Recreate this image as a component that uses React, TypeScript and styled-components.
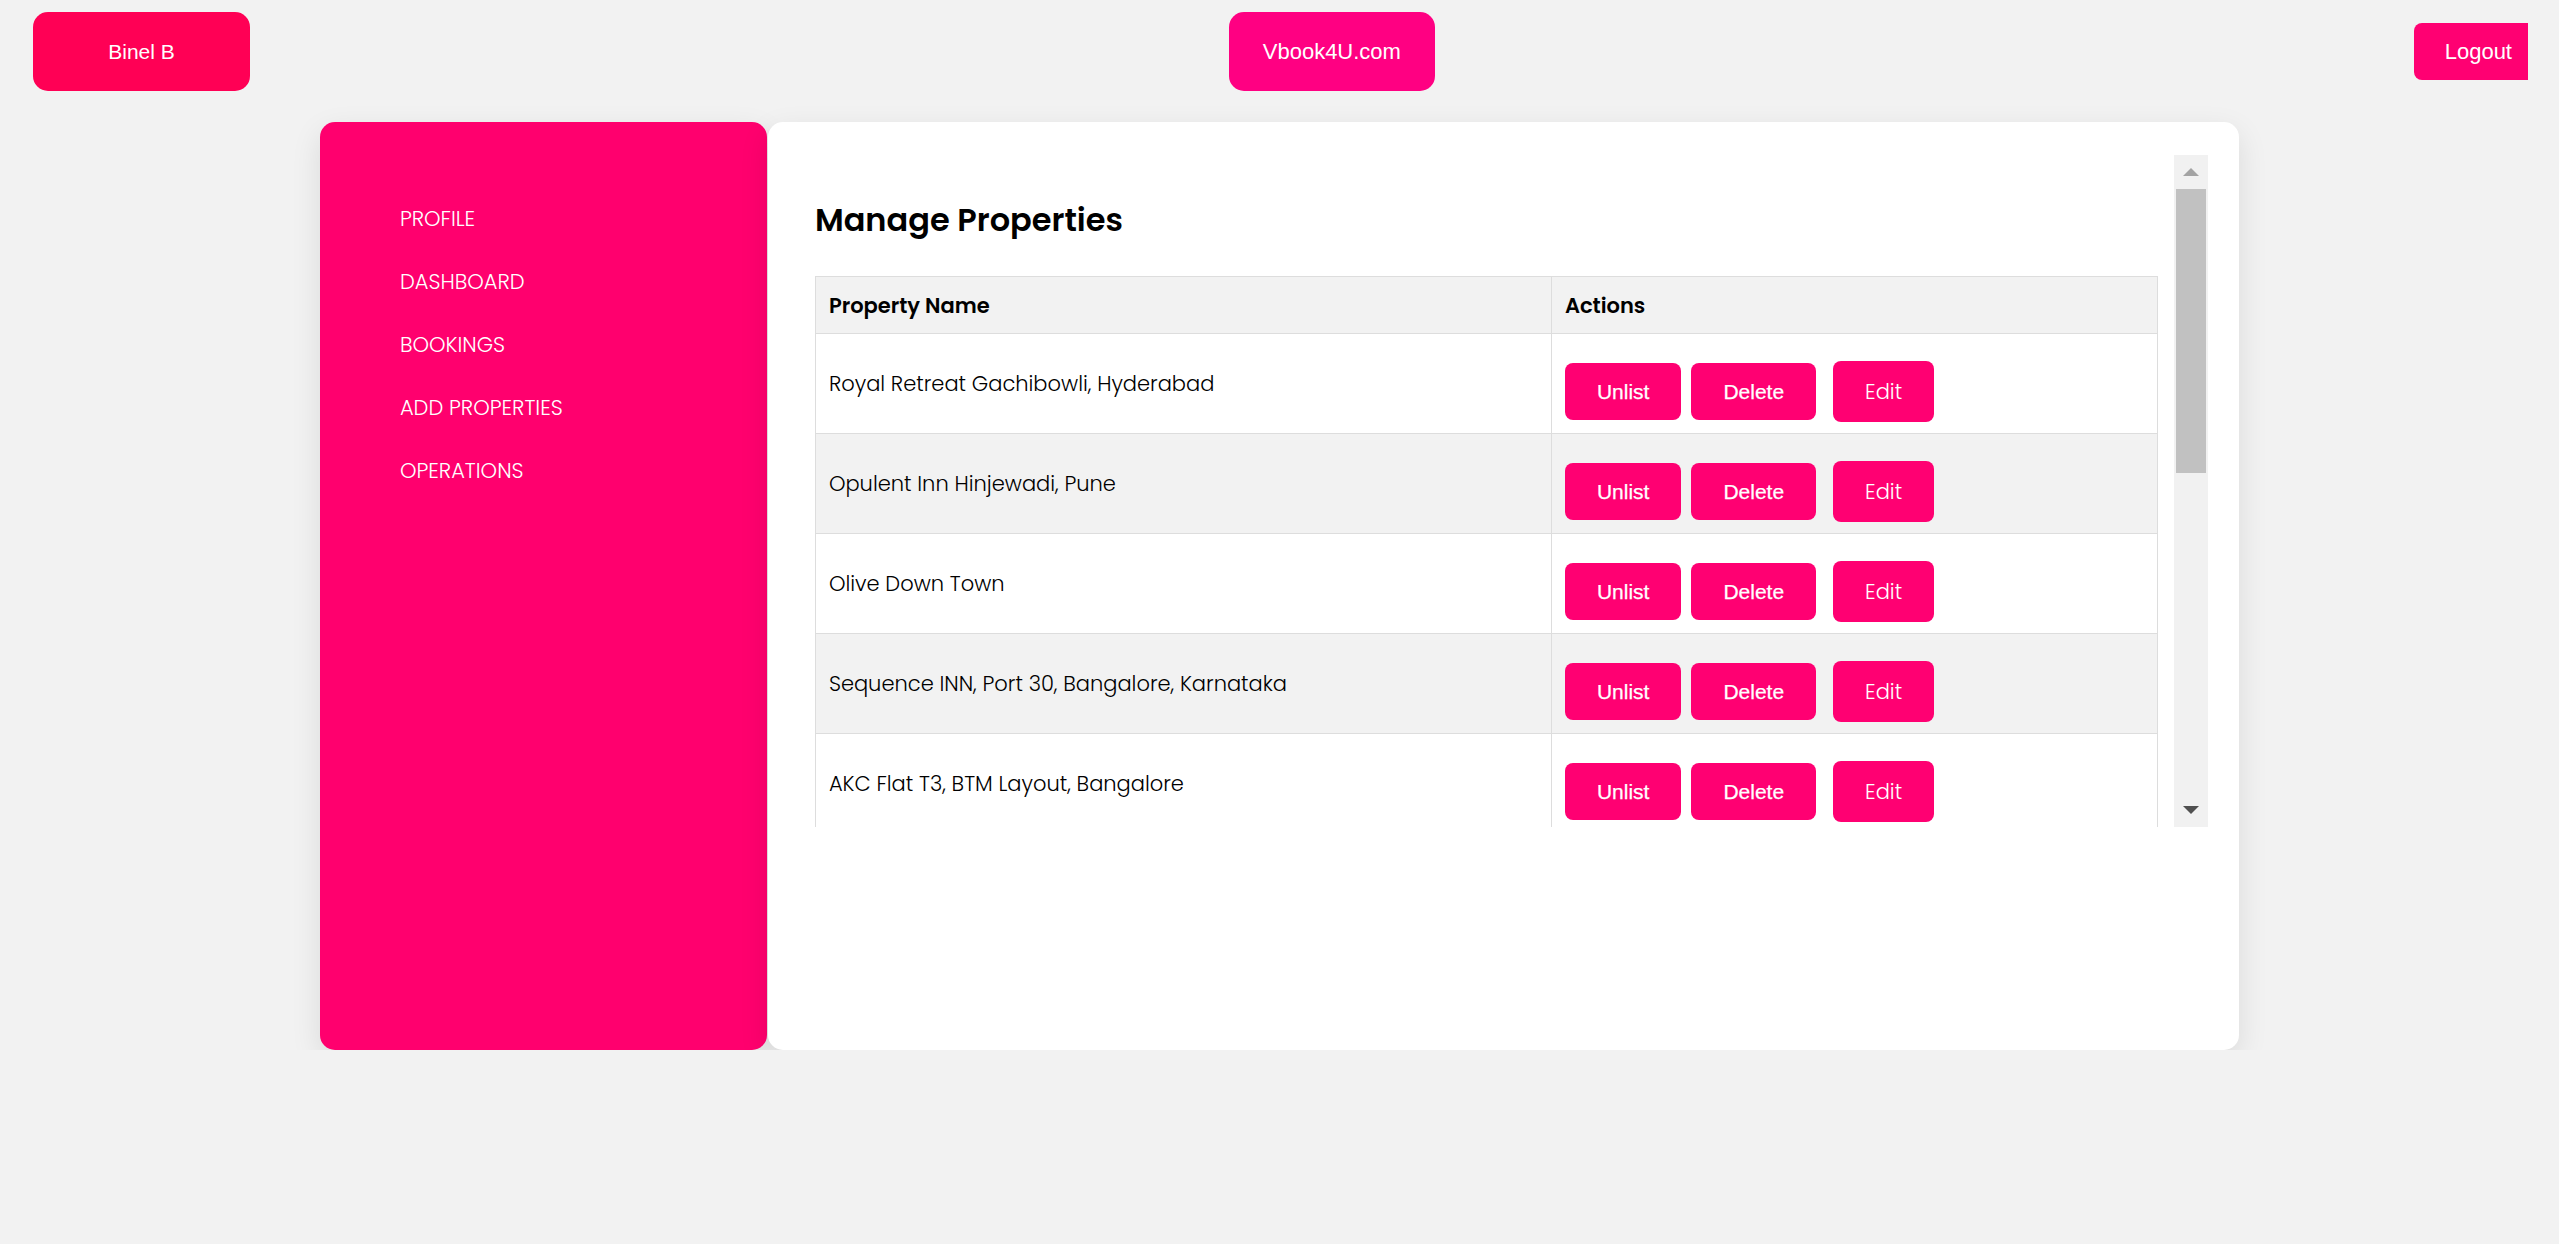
import React from 'react'
import styled, { createGlobalStyle } from 'styled-components'

const GlobalStyle = createGlobalStyle`
  html, body {
    margin: 0;
    padding: 0;
    background: #f2f2f2;
  }
  body {
    font-family: 'Poppins', 'Inter', 'Liberation Sans', sans-serif;
  }
`

const properties = [
  'Royal Retreat Gachibowli, Hyderabad',
  'Opulent Inn Hinjewadi, Pune',
  'Olive Down Town',
  'Sequence INN, Port 30, Bangalore, Karnataka',
  'AKC Flat T3, BTM Layout, Bangalore',
]

const menuItems = ['PROFILE', 'DASHBOARD', 'BOOKINGS', 'ADD PROPERTIES', 'OPERATIONS']

const App = () => {
  return (
    <>
      <GlobalStyle />
      <TopBar>
        <UserButton>Binel B</UserButton>
        <BrandButton>Vbook4U.com</BrandButton>
        <LogoutButton>Logout</LogoutButton>
      </TopBar>
      <Card>
        <Sidebar>
          {menuItems.map((item) => (
            <MenuItem key={item}>{item}</MenuItem>
          ))}
        </Sidebar>
        <Panel>
          <ScrollFrame>
            <Viewport>
              <Heading>Manage Properties</Heading>
              <Table>
                <thead>
                  <tr>
                    <HeadCell $width={709}>Property Name</HeadCell>
                    <HeadCell>Actions</HeadCell>
                  </tr>
                </thead>
                <tbody>
                  {properties.map((name, i) => (
                    <Row key={name} $striped={i % 2 === 1}>
                      <NameCell>{name}</NameCell>
                      <ActionCell>
                        <Actions>
                          <ActionButton $gap={10}>Unlist</ActionButton>
                          <ActionButton $gap={17}>Delete</ActionButton>
                          <EditButton>Edit</EditButton>
                        </Actions>
                      </ActionCell>
                    </Row>
                  ))}
                </tbody>
              </Table>
            </Viewport>
            <ScrollTrack>
              <ScrollArrowBox>
                <Arrow $dir='up' />
              </ScrollArrowBox>
              <ScrollThumb />
              <ScrollArrowBox>
                <Arrow $dir='down' />
              </ScrollArrowBox>
            </ScrollTrack>
          </ScrollFrame>
        </Panel>
      </Card>
    </>
  )
}

const TopBar = styled.header`
  display: flex;
  align-items: center;
  justify-content: space-between;
  padding: 12px 31px 0 33px;
`

const TopButton = styled.button`
  border: none;
  color: #fff;
  font-family: 'Liberation Sans', Arial, sans-serif;
  cursor: pointer;
  padding: 0;
`

const UserButton = styled(TopButton)`
  width: 217px;
  height: 79px;
  border-radius: 15px;
  background: #ff0055;
  font-size: 21px;
`

const BrandButton = styled(TopButton)`
  width: 206px;
  height: 79px;
  border-radius: 15px;
  background: #ff0082;
  font-size: 22px;
`

const LogoutButton = styled(TopButton)`
  height: 57px;
  padding: 0 16px 0 31px;
  border-radius: 8px 0 0 8px;
  background: #ff0072;
  font-size: 22px;
`

const Card = styled.main`
  display: flex;
  gap: 1px;
  width: 75%;
  height: 928px;
  margin: 31px auto 0;
`

const Sidebar = styled.nav`
  width: 447px;
  flex-shrink: 0;
  box-sizing: border-box;
  padding: 82px 0 0 80px;
  display: flex;
  flex-direction: column;
  gap: 33px;
  background: #ff006e;
  border-radius: 15px;
  box-shadow: 0 10px 30px rgba(0, 0, 0, 0.1);
`

const MenuItem = styled.a`
  color: #fff;
  font-size: 21px;
  font-weight: 300;
  line-height: 30px;
  cursor: pointer;
`

const Panel = styled.section`
  flex: 1;
  box-sizing: border-box;
  padding: 33px 31px 0;
  background: #fff;
  border-radius: 15px;
  box-shadow: 0 10px 30px rgba(0, 0, 0, 0.1);
`

const ScrollFrame = styled.div`
  display: flex;
  height: 672px;
`

const Viewport = styled.div`
  flex: 1;
  min-width: 0;
  overflow: hidden;
  padding: 0 16px;
`

const ScrollTrack = styled.div`
  width: 34px;
  flex-shrink: 0;
  display: flex;
  flex-direction: column;
  background: #f1f1f1;
`

const ScrollArrowBox = styled.div`
  height: 34px;
  display: flex;
  align-items: center;
  justify-content: center;

  &:last-child {
    margin-top: auto;
  }
`

const Arrow = styled.span<{ $dir: 'up' | 'down' }>`
  width: 0;
  height: 0;
  border-left: 8px solid transparent;
  border-right: 8px solid transparent;
  ${(p) =>
    p.$dir === 'up' ? 'border-bottom: 8px solid #a3a3a3;' : 'border-top: 8px solid #505050;'}
`

const ScrollThumb = styled.div`
  height: 284px;
  margin: 0 2px;
  background: #c1c1c1;
`

const Heading = styled.h1`
  margin: 45px 0 36px;
  font-size: 32px;
  line-height: 40px;
  font-weight: 600;
  color: #000;
`

const Table = styled.table`
  width: 100%;
  table-layout: fixed;
  border-collapse: collapse;
  font-size: 21px;
  color: #000;
`

const HeadCell = styled.th<{ $width?: number }>`
  width: ${(p) => (p.$width ? `${p.$width}px` : 'auto')};
  height: 56px;
  padding: 0 13px;
  text-align: left;
  font-weight: 600;
  background: #f2f2f2;
  border: 1px solid #dddddd;
`

const Row = styled.tr<{ $striped: boolean }>`
  background: ${(p) => (p.$striped ? '#f2f2f2' : '#fff')};
`

const NameCell = styled.td`
  padding: 0 13px;
  font-weight: 300;
  vertical-align: middle;
  border: 1px solid #dddddd;
`

const ActionCell = styled.td`
  padding: 27px 13px 11px;
  border: 1px solid #dddddd;
`

const Actions = styled.div`
  display: flex;
  align-items: center;
`

const ActionButton = styled.button<{ $gap: number }>`
  height: 57px;
  margin-right: ${(p) => p.$gap}px;
  padding: 0 32px;
  border: none;
  border-radius: 8px;
  background: #ff0072;
  color: #fff;
  font-family: 'Liberation Sans', Arial, sans-serif;
  font-size: 21px;
  -webkit-text-stroke: 0.25px #fff;
  cursor: pointer;
`

const EditButton = styled.button`
  height: 61px;
  padding: 0 32px;
  border: none;
  border-radius: 8px;
  background: #ff0072;
  color: #fff;
  font-family: 'Poppins', 'Inter', 'Liberation Sans', sans-serif;
  font-size: 21px;
  font-weight: 300;
  cursor: pointer;
`

export default App
